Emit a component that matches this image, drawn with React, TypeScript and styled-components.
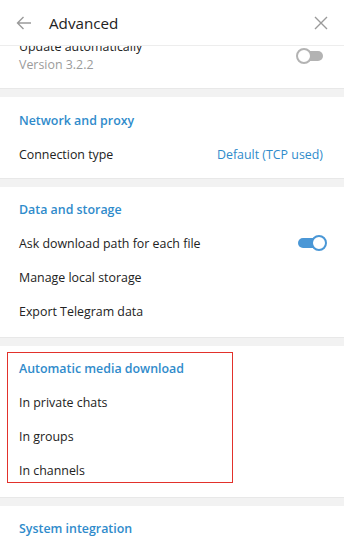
import React from "react";
import styled, { createGlobalStyle } from "styled-components";

const Global = createGlobalStyle`
  html, body { margin: 0; padding: 0; background: #ffffff; }
  body { font-family: "Open Sans", "Noto Sans", sans-serif; -webkit-font-smoothing: antialiased; }
`;

const Panel = styled.div`
  width: 344px;
  height: 549px;
  background: #ffffff;
  display: flex;
  flex-direction: column;
  overflow: hidden;
`;

const Header = styled.div`
  height: 46px;
  flex: 0 0 46px;
  display: flex;
  align-items: center;
  padding: 0 14px 0 15px;
  box-sizing: border-box;
  border-bottom: 1px solid #ededed;
  position: relative;
  z-index: 2;
  background: #fff;
`;

const IconButton = styled.div`
  width: 18px;
  height: 18px;
  display: flex;
  align-items: center;
  justify-content: center;
  color: #9a9a9a;
`;

const Title = styled.div`
  flex: 1;
  margin-left: 16px;
  font-size: 15.2px;
  color: #222;
  font-weight: 500;
`;

const Scroll = styled.div`
  flex: 1;
  overflow: hidden;
`;

const Inner = styled.div`
  margin-top: -8px;
`;

const TopBlock = styled.div`
  display: flex;
  align-items: center;
  justify-content: space-between;
  padding: 0 21px 14px 19px;
`;

const Lines = styled.div`
  display: flex;
  flex-direction: column;
`;

const MainLine = styled.div`
  font-size: 12.4px;
  line-height: 18px;
  color: #222;
`;

const SubLine = styled.div`
  font-size: 12.4px;
  line-height: 18px;
  color: #9b9b9b;
`;

const Divider = styled.div`
  height: 9px;
  background: #f2f2f2;
  border-top: 1px solid #e8e8e8;
  box-sizing: border-box;
`;

const Section = styled.div<{ $top: number; $bottom: number }>`
  position: relative;
  padding: ${(p) => p.$top}px 0 ${(p) => p.$bottom}px;
`;

const SectionTitle = styled.div`
  height: 34px;
  display: flex;
  align-items: center;
  padding-left: 19px;
  font-size: 12.4px;
  font-weight: 600;
  color: #2f8bcb;
`;

const Row = styled.div`
  height: 34px;
  display: flex;
  align-items: center;
  justify-content: space-between;
  padding: 0 21px 0 19px;
  font-size: 12.4px;
  color: #222;
`;

const RowValue = styled.span`
  color: #2f8bcb;
`;

const Track = styled.div<{ $on: boolean }>`
  position: relative;
  width: 26px;
  height: 10px;
  border-radius: 5px;
  background: ${(p) => (p.$on ? "#4a97d6" : "#b3b3b3")};
  margin-right: ${(p) => (p.$on ? "-1px" : "0px")};
`;

const Knob = styled.div<{ $on: boolean }>`
  position: absolute;
  top: -3px;
  left: ${(p) => (p.$on ? "13px" : "-1px")};
  width: 12px;
  height: 12px;
  border-radius: 50%;
  background: #fff;
  border: 2px solid ${(p) => (p.$on ? "#4a97d6" : "#b3b3b3")};
`;

const Highlight = styled.div`
  position: absolute;
  left: 7px;
  top: 6px;
  width: 226px;
  height: 131px;
  border: 1px solid #e2312b;
  box-sizing: border-box;
  pointer-events: none;
`;

const Toggle = ({ on }: { on: boolean }) => (
  <Track $on={on}>
    <Knob $on={on} />
  </Track>
);

const BackIcon = () => (
  <svg width="16" height="14" viewBox="0 0 16 14" fill="none" stroke="currentColor" strokeWidth="1.4">
    <path d="M15 7H1.5M7.5 1L1.5 7l6 6" />
  </svg>
);

const CloseIcon = () => (
  <svg width="14" height="14" viewBox="0 0 14 14" fill="none" stroke="currentColor" strokeWidth="1.4">
    <path d="M1 1l12 12M13 1L1 13" />
  </svg>
);

export default function App() {
  return (
    <>
      <Global />
      <Panel>
        <Header>
          <IconButton>
            <BackIcon />
          </IconButton>
          <Title>Advanced</Title>
          <IconButton>
            <CloseIcon />
          </IconButton>
        </Header>
        <Scroll>
          <Inner>
            <TopBlock>
              <Lines>
                <MainLine>Update automatically</MainLine>
                <SubLine>Version 3.2.2</SubLine>
              </Lines>
              <Toggle on={false} />
            </TopBlock>
            <Divider />
            <Section $top={6} $bottom={7}>
              <SectionTitle>Network and proxy</SectionTitle>
              <Row>
                <span>Connection type</span>
                <RowValue>Default (TCP used)</RowValue>
              </Row>
            </Section>
            <Divider />
            <Section $top={5} $bottom={9}>
              <SectionTitle>Data and storage</SectionTitle>
              <Row>
                <span>Ask download path for each file</span>
                <Toggle on={true} />
              </Row>
              <Row>Manage local storage</Row>
              <Row>Export Telegram data</Row>
            </Section>
            <Divider />
            <Section $top={5} $bottom={10}>
              <SectionTitle>Automatic media download</SectionTitle>
              <Row>In private chats</Row>
              <Row>In groups</Row>
              <Row>In channels</Row>
              <Highlight />
            </Section>
            <Divider />
            <Section $top={5} $bottom={0}>
              <SectionTitle>System integration</SectionTitle>
            </Section>
          </Inner>
        </Scroll>
      </Panel>
    </>
  );
}
